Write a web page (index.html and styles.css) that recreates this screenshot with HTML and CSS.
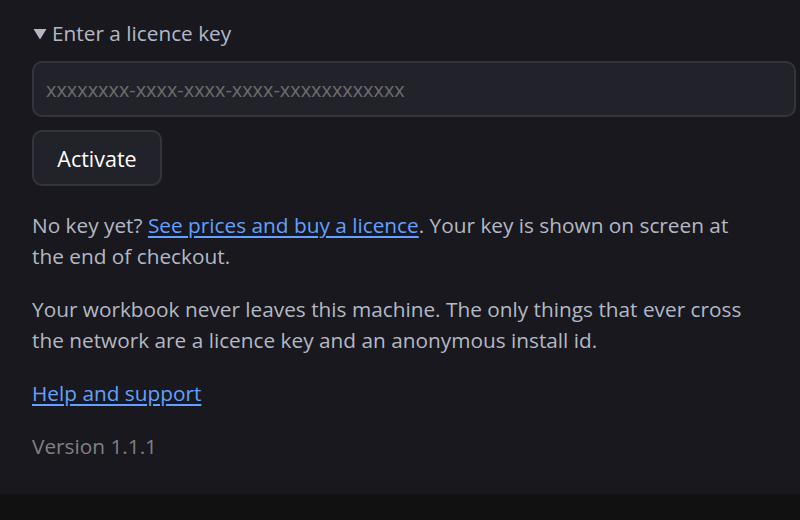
FILE: index.html
```html
<!DOCTYPE html>
<html lang="en">
<head>
<meta charset="utf-8">
<title>Licence</title>
<link rel="stylesheet" href="styles.css">
</head>
<body>
<main class="panel">
  <details class="licence" open>
    <summary class="licence-summary"><svg class="caret" width="14" height="12" viewBox="0 0 14 12" aria-hidden="true"><polygon points="0.5,1 13.5,1 7,11.5" fill="#b4b8c4"/></svg>Enter a licence key</summary>
    <input class="key-input" type="text" placeholder="xxxxxxxx-xxxx-xxxx-xxxx-xxxxxxxxxxxx">
    <button class="btn" type="button">Activate</button>
  </details>
  <p class="text">No key yet? <a href="#" class="link">See prices and buy a licence</a>. Your key is shown on screen at the end of checkout.</p>
  <p class="text">Your workbook never leaves this machine. The only things that ever cross the network are a licence key and an anonymous install id.</p>
  <p class="text"><a href="#" class="link">Help and support</a></p>
  <p class="text version">Version 1.1.1</p>
</main>
<div class="band"></div>
</body>
</html>
```
FILE: styles.css
```css
html, body {
  margin: 0;
  padding: 0;
  height: 100%;
}
body {
  background: #111111;
  font-family: "Open Sans", "Noto Sans", sans-serif;
  font-size: 20.8px;
  line-height: 31px;
  color: #b4b8c4;
  display: flex;
  flex-direction: column;
}
.panel {
  background: #18181e;
  height: 494px;
  box-sizing: border-box;
  padding: 18px 4px 0 32px;
}
.licence {
  display: flex;
  flex-direction: column;
}
.licence-summary {
  list-style: none;
  cursor: pointer;
  display: flex;
  align-items: center;
  height: 31px;
}
.licence-summary::-webkit-details-marker { display: none; }
.caret {
  margin-left: 1px;
  margin-right: 5px;
  margin-top: 1px;
}
.key-input {
  display: block;
  margin-top: 12px;
  width: 100%;
  height: 56px;
  box-sizing: border-box;
  background: #22222b;
  border: 2px solid #34343d;
  border-radius: 10px;
  padding: 0 12px;
  font-family: inherit;
  font-size: 19.9px;
  color: #e0e0e0;
  outline: none;
}
.key-input::placeholder {
  color: #6c6c70;
}
.btn {
  margin-top: 13px;
  align-self: flex-start;
  width: 130px;
  height: 56px;
  padding: 0;
  background: #22222b;
  border: 2px solid #34343d;
  border-radius: 10px;
  color: #ffffff;
  font-family: inherit;
  font-size: 21.5px;
}
.text {
  margin: 22px 0 0;
  max-width: 720px;
}
.text:first-of-type {
  margin-top: 24px;
}
.link {
  color: #64a0ff;
  text-decoration: underline;
  text-underline-offset: 3px;
}
.version {
  color: #808086;
}
.band {
  flex: 1;
  background: #111111;
}
```
